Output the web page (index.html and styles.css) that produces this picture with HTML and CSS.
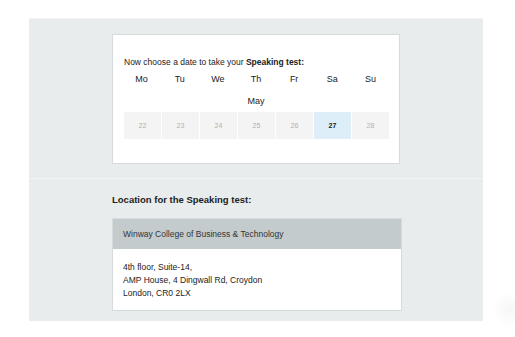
FILE: index.html
```html
<!DOCTYPE html>
<html lang="en">

<head>
    <meta charset="UTF-8">
    <meta name="viewport" content="width=device-width, initial-scale=1.0">
    <title>Speaking test</title>
    <link rel="stylesheet" href="styles.css">
</head>

<body>
    <div class="panel">
        <div class="section date-section">
            <div class="card">
                <p class="intro">Now choose a date to take your <strong>Speaking test:</strong></p>
                <div class="week">
                    <span>Mo</span>
                    <span>Tu</span>
                    <span>We</span>
                    <span>Th</span>
                    <span>Fr</span>
                    <span>Sa</span>
                    <span>Su</span>
                </div>
                <div class="month">May</div>
                <div class="days">
                    <span class="day">22</span>
                    <span class="day">23</span>
                    <span class="day">24</span>
                    <span class="day">25</span>
                    <span class="day">26</span>
                    <span class="day selected">27</span>
                    <span class="day">28</span>
                </div>
            </div>
        </div>

        <div class="section location-section">
            <h2>Location for the Speaking test:</h2>
            <div class="location">
                <div class="location-name">Winway College of Business &amp; Technology</div>
                <div class="location-address">
                    4th floor, Suite-14,<br>
                    AMP House, 4 Dingwall Rd, Croydon<br>
                    London, CR0 2LX
                </div>
            </div>
        </div>
    </div>

    <div class="fab-shadow"></div>
</body>

</html>
```

FILE: styles.css
```css
body {
    font-family: "Liberation Sans", Arial, sans-serif;
    color: #222;
    background-color: #fff;
    margin: 0;
    padding-top: 18px;
}

.panel {
    width: 454px;
    margin-left: 29px;
    background-color: #e8eced;
    border-top: 1px solid #f1f3f4;
}

.section {
    width: 288px;
    margin: 0 auto;
}

.date-section {
    padding: 15px 0 14px;
}

.card {
    background-color: #fff;
    border: 1px solid #d6dcde;
    padding: 22px 10px 24px;
}

.intro {
    margin: 0 0 0 1px;
    font-size: 8.5px;
    line-height: 11px;
    color: #222;
}

.intro strong {
    font-weight: bold;
}

.week {
    display: grid;
    grid-template-columns: repeat(7, 1fr);
    gap: 1px;
    margin-top: 5px;
    font-size: 9px;
    line-height: 12px;
    text-align: center;
    color: #222;
}

.month {
    margin-top: 10px;
    font-size: 9px;
    line-height: 12px;
    text-align: center;
    color: #222;
}

.days {
    display: grid;
    grid-template-columns: repeat(7, 1fr);
    gap: 1px;
    margin-top: 5px;
    padding-left: 1px;
}

.day {
    height: 27px;
    line-height: 27px;
    text-align: center;
    font-size: 7px;
    color: #b0b0b0;
    background-color: #f4f4f4;
}

.day.selected {
    background-color: #ddeef9;
    color: #1a1a1a;
    font-weight: bold;
}

.location-section {
    border-top: 1px solid #f1f3f4;
    width: 454px;
    padding: 15px 0 10px;
}

.location-section h2,
.location {
    width: 288px;
    margin-left: 83px;
}

.location-section h2 {
    margin-top: 0;
    margin-bottom: 12px;
    font-size: 9.5px;
    line-height: 12px;
    font-weight: bold;
    color: #222;
}

.location {
    background-color: #fff;
    border: 1px solid #d6dcde;
}

.location-name {
    background-color: #c3cbcd;
    height: 30px;
    line-height: 30px;
    padding-left: 10px;
    font-size: 8.5px;
    color: #333;
}

.location-address {
    padding: 12px 10px 10px;
    font-size: 8.5px;
    line-height: 13px;
    color: #222;
}

.fab-shadow {
    position: absolute;
    left: 492px;
    top: 292px;
    width: 36px;
    height: 36px;
    border-radius: 50%;
    background: radial-gradient(circle, rgba(0, 0, 0, 0.035), rgba(0, 0, 0, 0) 70%);
}
```
